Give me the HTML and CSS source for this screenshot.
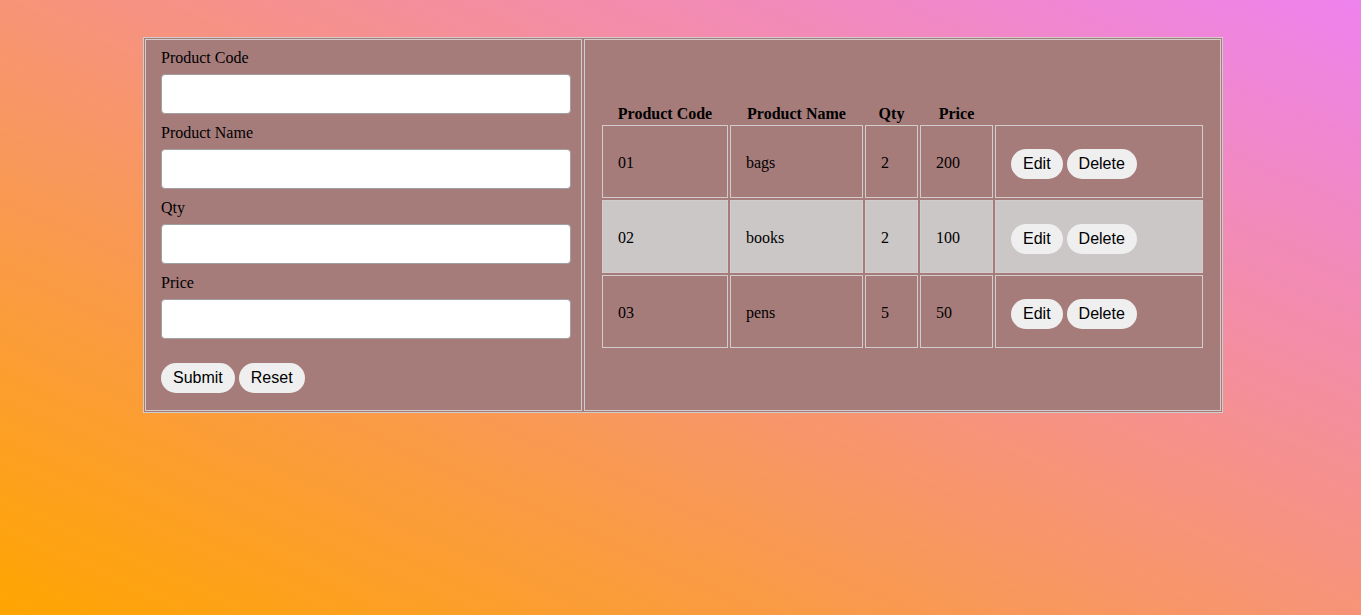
FILE: index.html
```html
<!DOCTYPE html>
<html lang="en">
<head>
<meta charset="utf-8">
<title>Products</title>
<link rel="stylesheet" href="styles.css">
</head>
<body>
<div class="frame">
  <form class="panel form-panel">
    <label class="field-label" for="code">Product Code</label>
    <input class="field" id="code" type="text">
    <label class="field-label" for="name">Product Name</label>
    <input class="field" id="name" type="text">
    <label class="field-label" for="qty">Qty</label>
    <input class="field" id="qty" type="text">
    <label class="field-label" for="price">Price</label>
    <input class="field" id="price" type="text">
    <div class="btn-row">
      <button class="pill" type="button">Submit</button>
      <button class="pill" type="reset">Reset</button>
    </div>
  </form>
  <div class="panel list-panel">
    <table class="products">
      <colgroup>
        <col class="c1"><col class="c2"><col class="c3"><col class="c4"><col class="c5">
      </colgroup>
      <thead>
        <tr><th>Product Code</th><th>Product Name</th><th>Qty</th><th>Price</th><th></th></tr>
      </thead>
      <tbody>
        <tr>
          <td>01</td><td>bags</td><td>2</td><td>200</td>
          <td class="actions"><div class="btn-row"><button class="pill" type="button">Edit</button><button class="pill" type="button">Delete</button></div></td>
        </tr>
        <tr class="alt">
          <td>02</td><td>books</td><td>2</td><td>100</td>
          <td class="actions"><div class="btn-row"><button class="pill" type="button">Edit</button><button class="pill" type="button">Delete</button></div></td>
        </tr>
        <tr>
          <td>03</td><td>pens</td><td>5</td><td>50</td>
          <td class="actions"><div class="btn-row"><button class="pill" type="button">Edit</button><button class="pill" type="button">Delete</button></div></td>
        </tr>
      </tbody>
    </table>
  </div>
</div>
</body>
</html>
```
FILE: styles.css
```css
html {
  min-height: 100%;
  background: linear-gradient(to top right, #ffa500, #ee82ee);
}
body {
  margin: 0;
  min-height: 615px;
  font-family: "Liberation Serif", "Times New Roman", serif;
  font-size: 16px;
  color: #000;
}
.frame {
  box-sizing: border-box;
  width: 1080px;
  margin: 37px 0 0 143px;
  border: 1px solid #d3cccc;
  padding: 1px;
  display: flex;
  gap: 2px;
  background: #a67c7b;
}
.panel {
  border: 1px solid #d3cccc;
  box-sizing: border-box;
}
.form-panel {
  width: 437px;
  padding: 8px 9px 17px 15px;
  margin: 0;
  display: flex;
  flex-direction: column;
  align-items: flex-start;
}
.field-label {
  display: block;
  line-height: 19px;
}
.field {
  box-sizing: border-box;
  width: 410px;
  height: 40px;
  margin: 7px 0 9px;
  border: 1px solid #a0a0a0;
  border-radius: 4px;
  background: #fff;
  padding: 0 8px;
  font: inherit;
}
.btn-row {
  display: flex;
  gap: 4px;
}
.form-panel .btn-row {
  margin-top: 15px;
}
.pill {
  height: 30px;
  padding: 0 12px;
  border: none;
  border-radius: 15px;
  background: #efefef;
  color: #000;
  font-family: "Liberation Sans", Arial, sans-serif;
  font-size: 16px;
  line-height: 30px;
  cursor: pointer;
}
.list-panel {
  width: 637px;
  padding: 0 15px;
  display: flex;
  align-items: center;
}
.products {
  width: 605px;
  table-layout: fixed;
  border-collapse: separate;
  border-spacing: 2px;
  margin-top: 1px;
}
.c1 { width: 126px; }
.c2 { width: 133px; }
.c3 { width: 53px; }
.c4 { width: 73px; }
.c5 { width: 208px; }
.products th {
  padding: 2px 0 1px;
  font-weight: bold;
  text-align: center;
  line-height: 17.4px;
}
.products td {
  box-sizing: border-box;
  height: 73px;
  padding: 2px 15px 0;
  border: 1px solid #d3cccc;
  vertical-align: middle;
  line-height: 18.4px;
}
.products tr.alt td {
  background: #cbc7c6;
}
.products td.actions {
  vertical-align: top;
  padding-top: 23px;
}
```
